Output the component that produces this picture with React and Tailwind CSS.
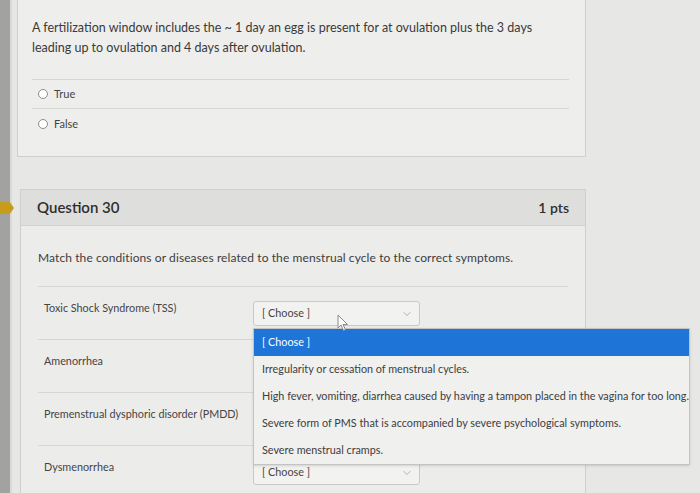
import { ChevronDown } from 'lucide-react'

const options = [
  'Irregularity or cessation of menstrual cycles.',
  'High fever, vomiting, diarrhea caused by having a tampon placed in the vagina for too long.',
  'Severe form of PMS that is accompanied by severe psychological symptoms.',
  'Severe menstrual cramps.',
]

const rows = [
  'Toxic Shock Syndrome (TSS)',
  'Amenorrhea',
  'Premenstrual dysphoric disorder (PMDD)',
  'Dysmenorrhea',
]

function Select({ open }) {
  return (
    <div className="relative w-[167px] h-[25px] mt-[14px] rounded-[3px] border border-[#c9c9c8] bg-[#f2f2f1] flex items-center justify-between pl-[8px] pr-[6px] text-[10.8px] text-[#444]">
      <span>[ Choose ]</span>
      <ChevronDown className="w-3 h-3 text-[#9a9a9a]" strokeWidth={1.5} />
      {open && (
        <div className="absolute left-[-1px] top-[26px] z-10 w-[437px] border border-[#c4c4c4] bg-[#f0f0ef] shadow-sm">
          <div className="h-[27px] bg-[#1f74d8] text-white flex items-center pl-[8px] text-[10.8px]">[ Choose ]</div>
          {options.map((o) => (
            <div key={o} className="h-[27px] flex items-center pl-[8px] text-[10.8px] text-[#3d3d3d] whitespace-nowrap">{o}</div>
          ))}
        </div>
      )}
    </div>
  )
}

export default function App() {
  return (
    <div className="relative w-[700px] h-[493px] overflow-hidden flex bg-[#e7e7e6]" style={{ fontFamily: 'Lato, "Open Sans", sans-serif' }}>
      {/* left strip */}
      <div className="w-[12px] shrink-0 bg-[#a2a2a1] border-r-[2px] border-[#d9d9d8]" />

      <div className="flex-1 flex flex-col">
        {/* previous question */}
        <div className="ml-[5px] w-[569px] border-x border-b border-[#cfcfce] bg-[#eeeeed] pl-[14px] pr-[16px] pt-[18px] pb-[17px]">
          <p className="text-[12.5px] leading-[20px] text-[#3a3a3a]">
            A fertilization window includes the ~ 1 day an egg is present for at ovulation plus the 3 days<br />
            leading up to ovulation and 4 days after ovulation.
          </p>
          <div className="mt-[21px] border-t border-[#d6d6d5]">
            <div className="h-[29px] flex items-center gap-[6px] pl-[6px] border-b border-[#d6d6d5] text-[11px] text-[#444]">
              <span className="w-[10px] h-[10px] rounded-full border border-[#8e8e8e] bg-white" />
              True
            </div>
            <div className="h-[30px] flex items-center gap-[6px] pl-[6px] text-[11px] text-[#444]">
              <span className="w-[10px] h-[10px] rounded-full border border-[#8e8e8e] bg-white" />
              False
            </div>
          </div>
        </div>

        {/* question 30 */}
        <div className="relative mt-[32px] ml-[8px] w-[566px] border border-[#cfcfce] bg-[#ececeb] flex-1">
          <div className="h-[36px] bg-[#dededd] border-b border-[#d2d2d1] flex items-center justify-between px-[16px]">
            <span className="text-[15px] font-semibold text-[#2e2e2e]">Question 30</span>
            <span className="text-[14px] font-semibold text-[#2e2e2e]">1 pts</span>
          </div>
          <div className="px-[17px]">
            <p className="pt-[24px] text-[12px] leading-[16px] text-[#3d3d3d] tracking-[0.1px]">
              Match the conditions or diseases related to the menstrual cycle to the correct symptoms.
            </p>
            <div className="mt-[20px]">
              {rows.map((r, i) => (
                <div key={r} className="h-[53px] flex border-t border-[#d6d6d5]">
                  <div className="w-[215px] pl-[6px] pt-[13px] text-[10.8px] leading-[16px] text-[#444]">{r}</div>
                  {i === 0 && <Select open />}
                  {i === 3 && <Select />}
                </div>
              ))}
            </div>
          </div>
        </div>
      </div>

      {/* question marker */}
      <div className="absolute left-0 top-[202px] w-[14px] h-[12px] bg-[#c79b1c]" style={{ clipPath: 'polygon(0 0, 70% 0, 100% 50%, 70% 100%, 0 100%)' }} />

      {/* mouse cursor */}
      <svg className="absolute left-[337px] top-[314px] z-20" width="12" height="18" viewBox="0 0 12 18">
        <path d="M1 1 L1 14 L4 11 L6.5 16.5 L8.5 15.5 L6 10.5 L10.5 10.5 Z" fill="#fafafa" stroke="#8a8a8a" strokeWidth="1" strokeLinejoin="round" />
      </svg>
    </div>
  )
}
